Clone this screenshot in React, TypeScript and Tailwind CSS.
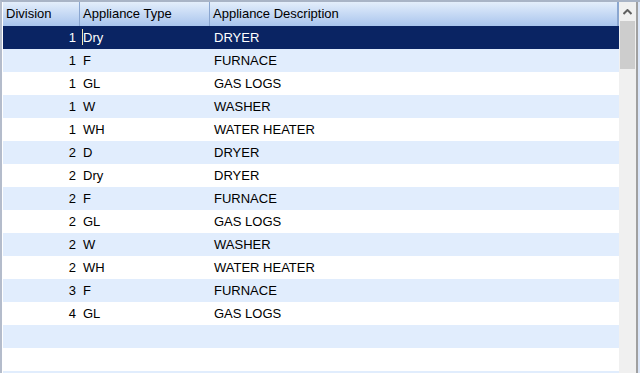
import React from "react";

const rows: [string, string, string][] = [
  ["1", "Dry", "DRYER"],
  ["1", "F", "FURNACE"],
  ["1", "GL", "GAS LOGS"],
  ["1", "W", "WASHER"],
  ["1", "WH", "WATER HEATER"],
  ["2", "D", "DRYER"],
  ["2", "Dry", "DRYER"],
  ["2", "F", "FURNACE"],
  ["2", "GL", "GAS LOGS"],
  ["2", "W", "WASHER"],
  ["2", "WH", "WATER HEATER"],
  ["3", "F", "FURNACE"],
  ["4", "GL", "GAS LOGS"],
  ["", "", ""],
  ["", "", ""],
  ["", "", ""],
];

export default function App() {
  return (
    <div
      className="w-[640px] h-[373px] overflow-hidden bg-white flex border-t-2 border-t-[#a9b4c6] border-l-2 border-l-[#b4bccb]"
      style={{ fontFamily: '"Liberation Sans", Arial, sans-serif' }}
    >
      <div className="flex-1 flex flex-col min-w-0 pl-px">
        <div className="h-[24px] shrink-0 flex text-[13px] text-black bg-gradient-to-b from-[#e4eefb] to-[#a9c5ed]">
          <div className="w-[77px] pl-[3px] flex items-center border-r border-r-[#8aa6d0]">Division</div>
          <div className="w-[130px] pl-[3px] flex items-center border-r border-r-[#8aa6d0]">Appliance Type</div>
          <div className="flex-1 pl-[3px] flex items-center border-r-2 border-r-[#8aa6d0]">Appliance Description</div>
        </div>
        {rows.map((r, i) => {
          const sel = i === 0;
          const bg = sel ? "bg-[#0a2463] text-white" : i % 2 === 1 ? "bg-[#e1edfd] text-black" : "bg-white text-black";
          return (
            <div key={i} className={`h-[23px] shrink-0 flex items-center text-[13px] ${bg}`}>
              <div className="w-[77px] pr-[4px] text-right">{r[0]}</div>
              <div className="w-[130px] pl-[3px] relative">
                {sel && <span className="absolute left-[2px] top-[1px] w-px h-[16px] bg-[#f5e6b0]" />}
                {r[1]}
              </div>
              <div className="flex-1 pl-[4px]">{r[2]}</div>
            </div>
          );
        })}
      </div>
      <div className="w-[17px] bg-[#f0f0f0] flex flex-col items-center shrink-0">
        <div className="h-[19px] w-full flex items-center justify-center">
          <svg width="9" height="6" viewBox="0 0 9 6">
            <path d="M0.5 5 L4.5 1 L8.5 5" fill="none" stroke="#606060" strokeWidth="2" />
          </svg>
        </div>
        <div className="w-[15px] h-[48px] bg-[#cdcdcd]" />
      </div>
      <div className="w-[2px] bg-[#a0a0a0] shrink-0" />
      <div className="w-[2px] bg-[#dbe6f8] shrink-0" />
    </div>
  );
}
